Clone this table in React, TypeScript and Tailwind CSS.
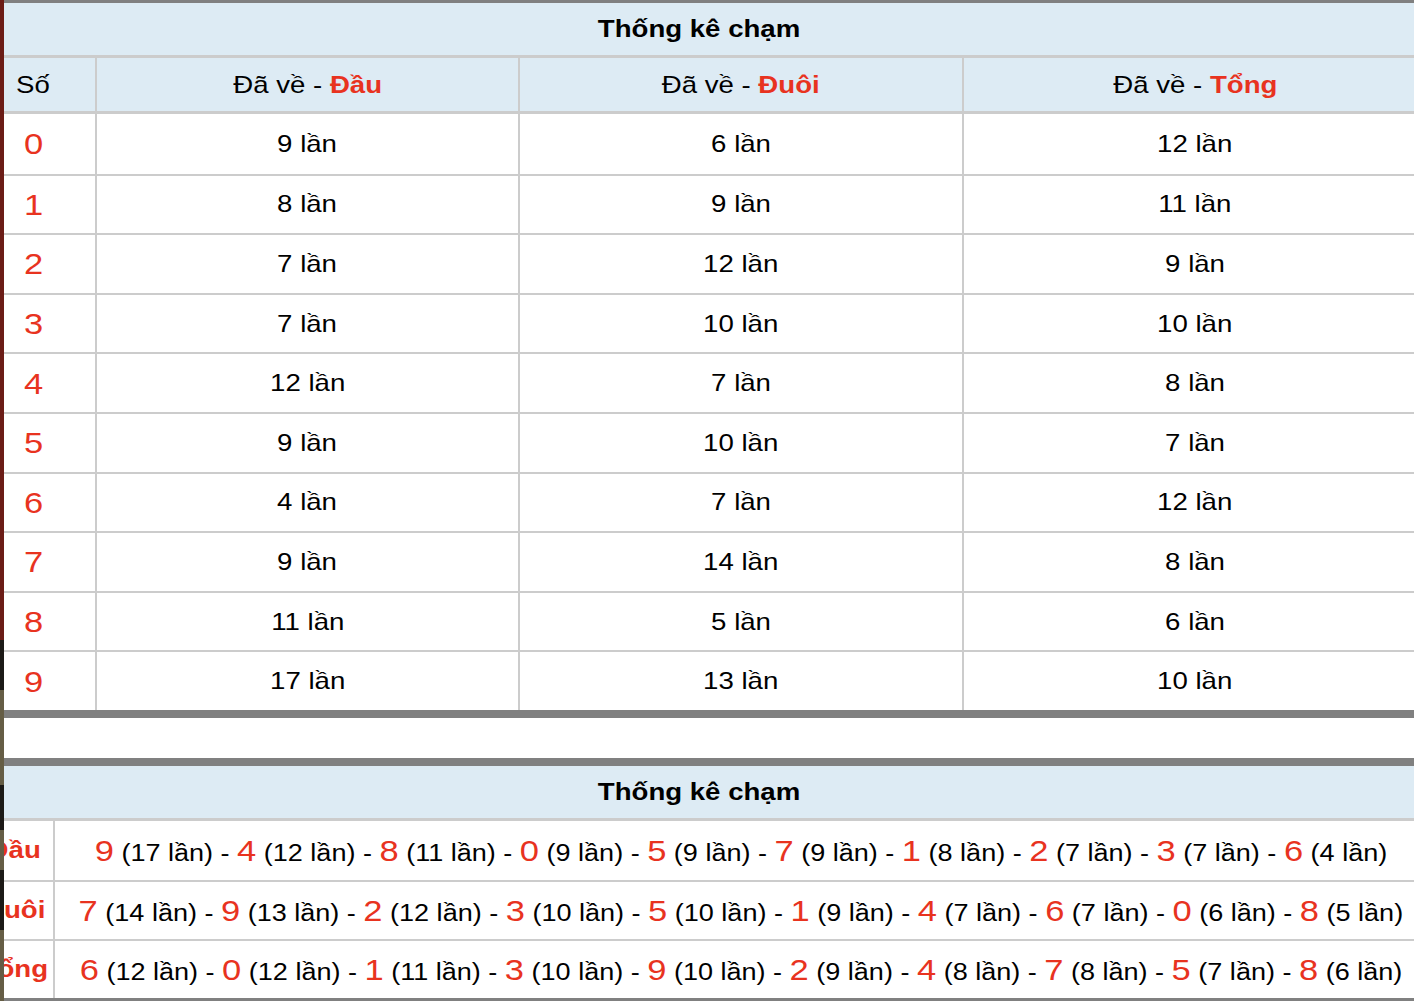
const daVe = [
  { so: 0, dau: 9, duoi: 6, tong: 12 },
  { so: 1, dau: 8, duoi: 9, tong: 11 },
  { so: 2, dau: 7, duoi: 12, tong: 9 },
  { so: 3, dau: 7, duoi: 10, tong: 10 },
  { so: 4, dau: 12, duoi: 7, tong: 8 },
  { so: 5, dau: 9, duoi: 10, tong: 7 },
  { so: 6, dau: 4, duoi: 7, tong: 12 },
  { so: 7, dau: 9, duoi: 14, tong: 8 },
  { so: 8, dau: 11, duoi: 5, tong: 6 },
  { so: 9, dau: 17, duoi: 13, tong: 10 },
];

const xepHang: { label: string; items: [number, number][] }[] = [
  {
    label: 'Đầu',
    items: [[9, 17], [4, 12], [8, 11], [0, 9], [5, 9], [7, 9], [1, 8], [2, 7], [3, 7], [6, 4]],
  },
  {
    label: 'Đuôi',
    items: [[7, 14], [9, 13], [2, 12], [3, 10], [5, 10], [1, 9], [4, 7], [6, 7], [0, 6], [8, 5]],
  },
  {
    label: 'Tổng',
    items: [[6, 12], [0, 12], [1, 11], [3, 10], [9, 10], [2, 9], [4, 8], [7, 8], [5, 7], [8, 6]],
  },
];

// chữ bị kéo ngang giống ảnh chụp
function T({ children, className = '' }: { children: React.ReactNode; className?: string }) {
  return <span className={`inline-block whitespace-nowrap scale-x-[1.15] ${className}`}>{children}</span>;
}

function Strip() {
  return (
    <div className="flex w-[4px] shrink-0 flex-col">
      <div className="h-[640px] shrink-0 bg-[#6b1c16]" />
      <div className="h-[50px] shrink-0 bg-[#1c1a17]" />
      <div className="h-[95px] shrink-0 bg-[#655d45]" />
      <div className="h-[45px] shrink-0 bg-[#1c1a17]" />
      <div className="h-[40px] shrink-0 bg-[#655d45]" />
      <div className="h-[60px] shrink-0 bg-[#1c1a17]" />
      <div className="h-[71px] shrink-0 bg-[#655d45]" />
    </div>
  );
}

function Header({ label, className = '' }: { label: string; className?: string }) {
  return (
    <div className={`flex items-center justify-center border-l-2 border-[#cccccc] ${className}`}>
      <T>
        Đã về - <span className="font-bold text-[#e8331f]">{label}</span>
      </T>
    </div>
  );
}

export default function App() {
  return (
    <div className="flex h-[1001px] w-[1415px] overflow-hidden bg-white font-['Liberation_Sans',Arial,sans-serif] text-black">
      <Strip />
      <div className="w-[1410px]">
        {/* bảng 1 */}
        <div className="border-t-[3px] border-b-[8px] border-[#808080]">
          <div className="flex h-[52px] items-center justify-center bg-[#ddebf4] pr-[20px] text-[24px] font-bold">
            <T>Thống kê chạm</T>
          </div>
          <div className="grid h-[59px] grid-cols-[91px_423px_444px_1fr] border-y-[3px] border-[#cccccc] bg-[#ddebf4] text-[24px]">
            <div className="flex items-center pl-[12px]">
              <T className="origin-left">Số</T>
            </div>
            <Header label="Đầu" />
            <Header label="Đuôi" />
            <Header label="Tổng" className="pl-[12px]" />
          </div>
          {daVe.map((r, i) => (
            <div
              key={r.so}
              className={`grid h-[59.6px] grid-cols-[91px_423px_444px_1fr] text-[24px] ${i > 0 ? 'border-t-2 border-[#cccccc]' : ''}`}
            >
              <div className="flex items-center pl-[20px] text-[30px] text-[#e8331f]">
                <T className="origin-left">{r.so}</T>
              </div>
              <div className="flex items-center justify-center border-l-2 border-[#cccccc]">
                <T>{r.dau} lần</T>
              </div>
              <div className="flex items-center justify-center border-l-2 border-[#cccccc]">
                <T>{r.duoi} lần</T>
              </div>
              <div className="flex items-center justify-center border-l-2 border-[#cccccc] pl-[12px]">
                <T>{r.tong} lần</T>
              </div>
            </div>
          ))}
        </div>

        <div className="h-[40px]" />

        {/* bảng 2 */}
        <div className="border-t-[8px] border-b-[8px] border-[#808080]">
          <div className="flex h-[52px] items-center justify-center bg-[#ddebf4] pr-[20px] text-[24px] font-bold">
            <T>Thống kê chạm</T>
          </div>
          <div className="overflow-hidden border-t-[3px] border-[#cccccc]">
            <div className="ml-[-28px]">
              {xepHang.map((r, i) => (
                <div
                  key={r.label}
                  className={`grid h-[59px] grid-cols-[77px_1fr] ${i > 0 ? 'border-t-2 border-[#cccccc]' : ''}`}
                >
                  <div className="flex items-center justify-center text-[24px] font-bold text-[#e8331f]">
                    <T>{r.label}</T>
                  </div>
                  <div className="flex items-center justify-center border-l-2 border-[#cccccc] pl-[13px] text-[23.5px]">
                    <T>
                      {r.items.map(([so, lan], k) => (
                        <span key={so}>
                          {k > 0 && ' - '}
                          <span className="text-[30px] text-[#e8331f]">{so}</span> ({lan} lần)
                        </span>
                      ))}
                    </T>
                  </div>
                </div>
              ))}
            </div>
          </div>
        </div>
      </div>
    </div>
  );
}
